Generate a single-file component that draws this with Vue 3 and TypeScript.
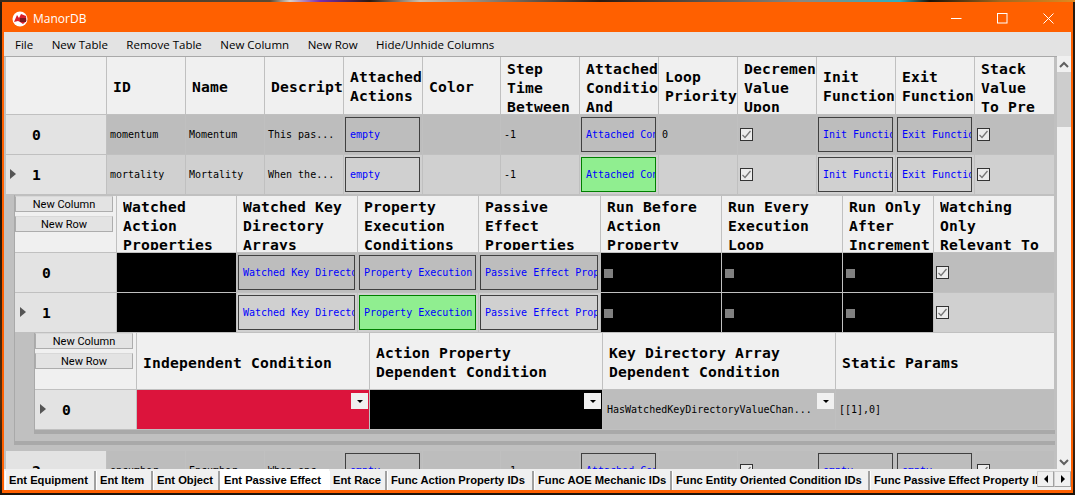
<template>
  <div class="desktop">
    <div class="window">
      <header class="titlebar">
        <svg class="logo" width="16" height="16" viewBox="0 0 16 16">
          <circle cx="8" cy="8" r="7.5" fill="#fff" />
          <path d="M2 11 L5 4 L7 7 L9 3 L14 5 L14.5 10 L11 13 L8 11 L6 10 Z" fill="#d8202c" />
          <rect x="8" y="7" width="6" height="4" fill="#7a1a20" />
        </svg>
        <span class="title">ManorDB</span>
        <div class="controls">
          <svg width="11" height="11" viewBox="0 0 11 11"><path d="M0 5.5H10.5" stroke="#fff" /></svg>
          <svg width="11" height="11" viewBox="0 0 11 11"><rect x=".5" y=".5" width="9.5" height="9.5" fill="none" stroke="#fff" /></svg>
          <svg width="11" height="11" viewBox="0 0 11 11"><path d="M.5 .5L10.5 10.5M10.5 .5L.5 10.5" stroke="#fff" /></svg>
        </div>
      </header>

      <nav class="menubar">
        <span v-for="item in menu" :key="item">{{ item }}</span>
      </nav>

      <div class="content">
        <div class="tables">
          <section v-for="table in tables" :key="table.id" :class="['table', `level-${table.level}`]">
            <div class="grid" :style="{ gridTemplateColumns: table.columns }">
              <template v-if="table.headers.length">
                <div class="corner">
                  <template v-if="table.level > 0">
                    <button class="small-btn">New Column</button>
                    <button class="small-btn">New Row</button>
                  </template>
                </div>
                <div v-for="head in table.headers" :key="head.join()" class="head">
                  <div :class="['head-label', { full: head.length > 2 }]">
                    <div v-for="line in head" :key="line">{{ line }}</div>
                  </div>
                </div>
              </template>

              <template v-for="row in table.rows" :key="row.index">
                <div class="row-head">
                  <svg v-if="row.current" class="pointer" width="6" height="10" viewBox="0 0 6 10"><path d="M0 0L6 5L0 10Z" fill="#555" /></svg>
                  <span>{{ row.index }}</span>
                </div>
                <div
                  v-for="(cell, i) in row.cells"
                  :key="i"
                  :class="['cell', row.index % 2 ? 'odd' : 'even', `kind-${cell.kind}`]"
                >
                  <span v-if="cell.kind === 'text'" class="cell-text">{{ cell.text }}</span>
                  <span v-else-if="cell.kind === 'link' || cell.kind === 'green'" class="link-box">{{ cell.text }}</span>
                  <span v-else-if="cell.kind === 'black'" class="null-box"></span>
                  <span v-else-if="cell.kind === 'check'" class="check">
                    <svg width="11" height="11" viewBox="0 0 11 11"><path d="M1.5 6L4 8.5L9.5 2" fill="none" stroke="#777" stroke-width="1.3" /></svg>
                  </span>
                  <template v-else-if="cell.kind === 'combo' || cell.kind === 'red' || cell.kind === 'dark'">
                    <span class="cell-text combo-text">{{ cell.text }}</span>
                    <span class="drop"><i></i></span>
                  </template>
                </div>
              </template>
            </div>
          </section>
        </div>

        <aside class="scrollbar">
          <svg width="14" height="14" viewBox="0 0 14 14"><path d="M3 9L7 5L11 9" fill="none" stroke="#606060" stroke-width="2" /></svg>
          <div class="thumb"></div>
          <div class="track"></div>
          <svg width="14" height="14" viewBox="0 0 14 14"><path d="M3 5L7 9L11 5" fill="none" stroke="#606060" stroke-width="2" /></svg>
        </aside>
      </div>

      <footer class="tabs">
        <div class="tab-list">
          <div
            v-for="tab in tabs"
            :key="tab.label"
            :class="['tab', { active: tab.label === activeTab }]"
            :style="{ width: tab.width + 'px' }"
          >{{ tab.label }}</div>
        </div>
        <div class="tab-arrows">
          <span><i class="left"></i></span>
          <span><i class="right"></i></span>
        </div>
      </footer>
    </div>
  </div>
</template>

<script setup lang="ts">
type CellKind = 'text' | 'link' | 'green' | 'check' | 'black' | 'void' | 'combo' | 'red' | 'dark'

interface Cell {
  kind: CellKind
  text?: string
}

interface Row {
  index: number
  current?: boolean
  cells: Cell[]
}

interface Table {
  id: string
  level: number
  columns: string
  headers: string[][]
  rows: Row[]
}

const text = (value = ''): Cell => ({ kind: 'text', text: value })
const link = (value: string): Cell => ({ kind: 'link', text: value })
const green = (value: string): Cell => ({ kind: 'green', text: value })
const check: Cell = { kind: 'check' }
const black: Cell = { kind: 'black' }

const menu = ['File', 'New Table', 'Remove Table', 'New Column', 'New Row', 'Hide/Unhide Columns']

const mainColumns = '101px 79px 79px 79px 79px 78px 79px 79px 79px 79px 79px 79px 80px'

const tables: Table[] = [
  {
    id: 'effects',
    level: 0,
    columns: mainColumns,
    headers: [
      ['ID'],
      ['Name'],
      ['Description'],
      ['Attached', 'Actions'],
      ['Color'],
      ['Step', 'Time', 'Between'],
      ['Attached', 'Conditions', 'And'],
      ['Loop', 'Priority'],
      ['Decrement', 'Value', 'Upon'],
      ['Init', 'Function'],
      ['Exit', 'Function'],
      ['Stack', 'Value', 'To Pre'],
    ],
    rows: [
      {
        index: 0,
        cells: [
          text('momentum'), text('Momentum'), text('This pas...'), link('empty'), text(), text('-1'),
          link('Attached Conditions'), text('0'), check, link('Init Function'), link('Exit Function'), check,
        ],
      },
      {
        index: 1,
        current: true,
        cells: [
          text('mortality'), text('Mortality'), text('When the...'), link('empty'), text(), text('-1'),
          green('Attached Conditions'), text(), check, link('Init Function'), link('Exit Function'), check,
        ],
      },
    ],
  },
  {
    id: 'properties',
    level: 1,
    columns: '102px 120px 121px 121px 122px 121px 121px 91px 121px',
    headers: [
      ['Watched', 'Action', 'Properties'],
      ['Watched Key', 'Directory', 'Arrays'],
      ['Property', 'Execution', 'Conditions'],
      ['Passive', 'Effect', 'Properties'],
      ['Run Before', 'Action', 'Property'],
      ['Run Every', 'Execution', 'Loop'],
      ['Run Only', 'After', 'Increment'],
      ['Watching', 'Only', 'Relevant To'],
    ],
    rows: [
      {
        index: 0,
        cells: [
          { kind: 'void' }, link('Watched Key Directory'), link('Property Execution'), link('Passive Effect Properties'),
          black, black, black, check,
        ],
      },
      {
        index: 1,
        current: true,
        cells: [
          { kind: 'void' }, link('Watched Key Directory'), green('Property Execution'), link('Passive Effect Properties'),
          black, black, black, check,
        ],
      },
    ],
  },
  {
    id: 'conditions',
    level: 2,
    columns: '102px 233px 233px 233px 219px',
    headers: [
      ['Independent Condition'],
      ['Action Property', 'Dependent Condition'],
      ['Key Directory Array', 'Dependent Condition'],
      ['Static Params'],
    ],
    rows: [
      {
        index: 0,
        current: true,
        cells: [
          { kind: 'red' }, { kind: 'dark' },
          { kind: 'combo', text: 'HasWatchedKeyDirectoryValueChan...' }, text('[[1],0]'),
        ],
      },
    ],
  },
  {
    id: 'effects-rest',
    level: 3,
    columns: mainColumns,
    headers: [],
    rows: [
      {
        index: 2,
        cells: [
          text('encumber'), text('Encumber'), text('When enc...'), link('empty'), text(), text('-1'),
          link('Attached Conditions'), text(), check, link('empty'), link('empty'), check,
        ],
      },
    ],
  },
]

const activeTab = 'Ent Passive Effect'

const tabs = [
  { label: 'Ent Equipment', width: 91 },
  { label: 'Ent Item', width: 57 },
  { label: 'Ent Object', width: 67 },
  { label: 'Ent Passive Effect', width: 109 },
  { label: 'Ent Race', width: 58 },
  { label: 'Func Action Property IDs', width: 147 },
  { label: 'Func AOE Mechanic IDs', width: 138 },
  { label: 'Func Entity Oriented Condition IDs', width: 198 },
  { label: 'Func Passive Effect Property IDs', width: 200 },
]
</script>

<style>
html,
body {
  margin: 0;
  background: #1c140c;
  overflow: hidden;
}
</style>

<style scoped>
.desktop {
  width: 1075px;
  height: 495px;
  box-sizing: border-box;
  padding: 2px;
  overflow: hidden;
  background:
    linear-gradient(90deg, #3a2c1c 0, #5a4a34 270px, #d8d0c8 290px, #7a2fb0 320px, #2a1a10 370px, #c8c0b0 420px, #2a1a10 600px, #8a8880 800px, #30b0c0 900px, #1a1208 930px, #a06820 1000px, #e08a20 1075px) top / 100% 2px no-repeat,
    linear-gradient(180deg, #2a1c10 0, #1c140c 200px, #5a3010 400px, #1c140c 495px);
}

.window {
  width: 1071px;
  height: 491px;
  box-sizing: border-box;
  display: flex;
  flex-direction: column;
  border: solid #ff6000;
  border-width: 2px 2px 3px 2px;
  background: #f0f0f0;
  font-family: Roboto, "Open Sans", sans-serif;
  color: #000;
}

.titlebar {
  flex: none;
  height: 28px;
  display: flex;
  align-items: center;
  background: #ff6000;
  padding-left: 8px;
}

.logo {
  margin-top: 2px;
}

.title {
  margin-left: 5px;
  color: #fff;
  font-family: "Open Sans", sans-serif;
  font-size: 12px;
}

.controls {
  margin-left: auto;
  display: flex;
  gap: 35px;
  padding: 0 17px 0 0;
}

.menubar {
  flex: none;
  height: 24px;
  display: flex;
  align-items: center;
  gap: 18.5px;
  padding-left: 11px;
  background: #e3e3e3;
  font-family: "Open Sans", sans-serif;
  font-size: 11.5px;
}

.content {
  flex: 1;
  min-height: 0;
  display: flex;
  overflow: hidden;
}

.tables {
  flex: none;
  width: 1053px;
  box-sizing: border-box;
  padding: 0 2px;
  background: #c0c0c0;
  border-top: 1px solid #a9a9a9;
}

.grid {
  display: grid;
  font-family: "DejaVu Sans Mono", monospace;
}

.level-1 {
  margin-left: 8px;
  padding-top: 1px;
  border-left: 1px solid #a9a9a9;
}

.level-2 {
  margin: 0 0 6px 8px;
  padding: 0 0 7px 19px;
  border-left: 1px solid #a9a9a9;
  border-bottom: 4px solid #a9a9a9;
}

.level-2 .grid {
  border-left: 1px solid #a9a9a9;
  border-bottom: 4px solid #a9a9a9;
}

.corner,
.head {
  height: 57px;
  box-sizing: border-box;
  background: #f0f0f0;
  border-right: 1px solid #c0c0c0;
  border-bottom: 1px solid #c0c0c0;
}

.level-0 .corner,
.level-0 .head {
  height: 58px;
}

.corner {
  display: flex;
  flex-direction: column;
  align-items: flex-start;
  gap: 4px;
}

.small-btn {
  width: 98px;
  height: 16px;
  padding: 1px 0 0;
  border: 1px solid #adadad;
  border-top-color: #d8d8d8;
  background: #e3e3e3;
  font-family: Roboto, sans-serif;
  font-size: 11px;
  line-height: 13px;
  color: #000;
}

.head {
  display: flex;
  align-items: center;
  padding: 2px 0 0 6px;
  overflow: hidden;
  white-space: nowrap;
  font-size: 14.67px;
  font-weight: 700;
  line-height: 19px;
  letter-spacing: 0.17px;
}

.level-0 .head {
  padding-bottom: 1px;
}

.head-label.full {
  align-self: flex-start;
  margin-top: -1px;
  height: 53px;
  overflow: hidden;
}

.level-0 .head-label.full {
  margin-top: 0;
}

.row-head {
  position: relative;
  height: 40px;
  box-sizing: border-box;
  padding-left: 26px;
  display: flex;
  align-items: center;
  background: #e3e3e3;
  border-right: 1px solid #c0c0c0;
  border-bottom: 1px solid #c0c0c0;
  font-size: 14.67px;
  font-weight: 700;
}

.level-1 .row-head,
.level-2 .row-head {
  padding-left: 27px;
}

.pointer {
  position: absolute;
  left: 4px;
  top: 14px;
}

.level-1 .pointer,
.level-2 .pointer {
  left: 5px;
}

.cell {
  position: relative;
  height: 40px;
  box-sizing: border-box;
  min-width: 0;
  display: flex;
  align-items: center;
  overflow: hidden;
  white-space: nowrap;
  border-right: 1px solid #c0c0c0;
  border-bottom: 1px solid #c0c0c0;
  font-size: 10px;
}

.even {
  background: #bdbdbd;
}

.odd {
  background: #d0d0d0;
}

.cell-text {
  padding-left: 3px;
}

.kind-link,
.kind-green {
  padding: 2px 2px 2px 1px;
}

.link-box {
  flex: 1;
  align-self: stretch;
  min-width: 0;
  display: flex;
  align-items: center;
  overflow: hidden;
  padding-left: 4px;
  border: 1px solid #404040;
  color: #0000ff;
}

.kind-green .link-box {
  background: #90ee90;
  border-color: #007f00;
}

.kind-black,
.kind-void,
.kind-dark {
  background: #000;
}

.kind-red {
  background: #dc143c;
}

.null-box {
  width: 9px;
  height: 9px;
  margin: 1px 0 0 3px;
  background: #808080;
}

.check {
  width: 11px;
  height: 11px;
  margin-left: 2px;
  display: block;
  border: 1px solid #333;
  background: #ececec;
}

.check svg {
  display: block;
}

.combo-text {
  padding-left: 4px;
}

.drop {
  position: absolute;
  right: 1px;
  top: 3px;
  width: 17px;
  height: 16px;
  display: flex;
  align-items: center;
  justify-content: center;
  background: #f0f0f0;
}

.drop i {
  border: 3px solid transparent;
  border-top: 3px solid #000;
  border-bottom: 0;
}

.scrollbar {
  flex: none;
  width: 14px;
  display: flex;
  flex-direction: column;
  background: #f0f0f0;
}

.scrollbar svg {
  flex: none;
  margin-top: 2px;
}

.thumb {
  flex: none;
  height: 55px;
  background: #cdcdcd;
}

.track {
  flex: 1;
}

.tabs {
  flex: none;
  height: 21px;
  display: flex;
  background: #f0f0f0;
  overflow: hidden;
  font-family: "Liberation Sans", Arial, sans-serif;
  font-size: 11.2px;
  font-weight: 700;
}

.tab-list {
  flex: none;
  width: 1033px;
  display: flex;
  padding-left: 1px;
  box-sizing: border-box;
  overflow: hidden;
}

.tab {
  flex: none;
  box-sizing: border-box;
  height: 19px;
  margin-top: 2px;
  padding-left: 3px;
  line-height: 18px;
  white-space: nowrap;
  overflow: hidden;
  border-right: 2px solid #a0a0a0;
  border-left: 1px solid #fff;
}

.tab.active {
  height: 21px;
  margin-top: 0;
  padding-top: 2px;
  background: #fff;
  border-right: 0;
}

.tab-arrows {
  flex: none;
  display: flex;
  height: 16px;
  margin-top: 2px;
}

.tab-arrows span {
  width: 17px;
  box-sizing: border-box;
  display: flex;
  align-items: center;
  justify-content: center;
  border: 1px solid #d0d0d0;
  border-bottom-color: #a0a0a0;
  border-right-color: #a0a0a0;
}

.tab-arrows i {
  border: 4px solid transparent;
}

.tab-arrows .left {
  border-left: 0;
  border-right: 4px solid #000;
}

.tab-arrows .right {
  border-right: 0;
  border-left: 4px solid #000;
}
</style>
